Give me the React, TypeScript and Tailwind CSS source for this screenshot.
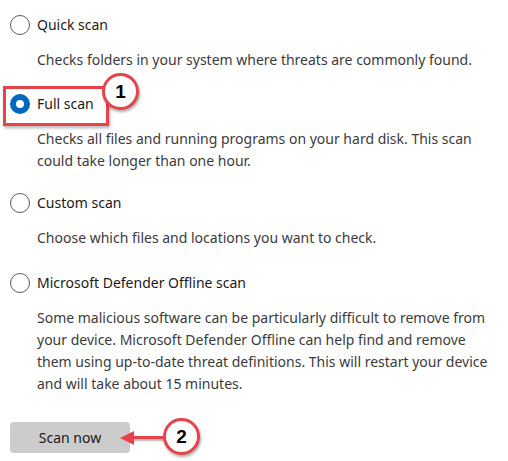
import React from "react";

const font = { fontFamily: '"Noto Sans", "Open Sans", sans-serif' };

function Radio({ checked }: { checked?: boolean }) {
  if (checked) {
    return (
      <span className="w-[20px] h-[20px] rounded-full bg-[#0067c0] flex items-center justify-center shrink-0">
        <span className="w-[8px] h-[8px] rounded-full bg-white" />
      </span>
    );
  }
  return <span className="w-[20px] h-[20px] rounded-full border border-[#5a5a5a] shrink-0" />;
}

function Option({
  label,
  checked,
  children,
  className,
}: {
  label: string;
  checked?: boolean;
  children: React.ReactNode;
  className?: string;
}) {
  return (
    <div className={className}>
      <div className="flex items-center gap-[7px] h-[22px] pl-[10px]">
        <Radio checked={checked} />
        <span className="text-[14px] text-[#1a1a1a] leading-[22px]">{label}</span>
      </div>
      <p className="mt-[13px] pl-[37px] pr-[18px] text-[14px] leading-[22px] text-[#3b3b3b]">{children}</p>
    </div>
  );
}

function Badge({ n, className }: { n: string; className: string }) {
  return (
    <div
      className={
        "absolute w-[37px] h-[37px] rounded-full bg-white border-[3px] border-[#e8434b] flex items-center justify-center shadow-[1px_2px_3px_rgba(0,0,0,0.35)] " +
        className
      }
    >
      <span className="text-[19px] font-bold text-black leading-none" style={{ fontFamily: '"Liberation Sans", Arial, sans-serif' }}>
        {n}
      </span>
    </div>
  );
}

export default function App() {
  return (
    <div className="relative w-[508px] h-[461px] bg-white overflow-hidden" style={font}>
      <div className="flex flex-col pt-[14px]">
        <Option label="Quick scan">Checks folders in your system where threats are commonly found.</Option>
        <Option label="Full scan" checked className="mt-[22px]">
          Checks all files and running programs on your hard disk. This scan could take longer than one hour.
        </Option>
        <Option label="Custom scan" className="mt-[20px]">
          Choose which files and locations you want to check.
        </Option>
        <Option label="Microsoft Defender Offline scan" className="mt-[23px]">
          Some malicious software can be particularly difficult to remove from your device. Microsoft Defender Offline can help find and remove them using up-to-date threat definitions. This will restart your device and will take about 15 minutes.
        </Option>
        <div className="pl-[10px] mt-[27px]">
          <button className="w-[120px] h-[31px] rounded-[4px] bg-[#cccccc] text-[14px] text-[#1a1a1a]">Scan now</button>
        </div>
      </div>

      {/* Annotation 1 */}
      <div className="absolute left-[3px] top-[86px] w-[106px] h-[40px] border-[3px] border-[#e8434b] shadow-[1px_2px_3px_rgba(0,0,0,0.3)]" />
      <Badge n="1" className="left-[102px] top-[73px]" />

      {/* Annotation 2 */}
      <div className="absolute left-[128px] top-[436px] w-[38px] h-[3px] bg-[#e8434b] shadow-[1px_2px_2px_rgba(0,0,0,0.3)]" />
      <svg className="absolute left-[120px] top-[430px]" width="14" height="16" viewBox="0 0 14 16">
        <polygon points="0,8 14,1 14,15" fill="#e8434b" />
      </svg>
      <Badge n="2" className="left-[163px] top-[418px]" />
    </div>
  );
}
